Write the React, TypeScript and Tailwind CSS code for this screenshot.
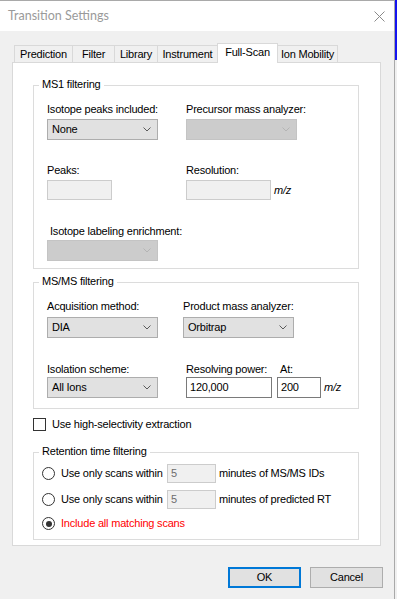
import React from "react";

const Chevron = ({ disabled }: { disabled?: boolean }) => (
  <svg width="8" height="5" viewBox="0 0 8 5" className="shrink-0">
    <polyline
      points="0.5,0.5 4,4 7.5,0.5"
      fill="none"
      stroke={disabled ? "#b4b4b4" : "#5a5a5a"}
      strokeWidth="1"
    />
  </svg>
);

const Combo = ({ value, disabled }: { value?: string; disabled?: boolean }) => (
  <div
    className={`h-[21px] w-[111px] flex items-center justify-between pl-[4px] pr-[6px] border ${
      disabled ? "bg-[#cccccc] border-[#c4c4c4]" : "bg-[#e1e1e1] border-[#adadad]"
    }`}
  >
    <span>{value}</span>
    <Chevron disabled={disabled} />
  </div>
);

const Label = ({ children, className = "" }: { children: React.ReactNode; className?: string }) => (
  <div className={`h-[13px] leading-[13px] whitespace-nowrap ${className}`}>{children}</div>
);

const Group = ({
  title,
  className = "",
  children,
}: {
  title: string;
  className?: string;
  children: React.ReactNode;
}) => (
  <div className={`relative w-[326px] border border-[#dcdcdc] ${className}`}>
    <span className="absolute -top-[8px] left-[5px] bg-white px-[3px] leading-[13px]">{title}</span>
    {children}
  </div>
);

const Radio = ({ checked }: { checked?: boolean }) => (
  <div className="w-[13px] h-[13px] rounded-full border border-[#333333] bg-white flex items-center justify-center shrink-0">
    {checked && <div className="w-[6px] h-[6px] rounded-full bg-[#333333]" />}
  </div>
);

const tabs = [
  { name: "Prediction", w: "w-[59px]" },
  { name: "Filter", w: "w-[43px]" },
  { name: "Library", w: "w-[44px]" },
  { name: "Instrument", w: "w-[61px]" },
  { name: "Full-Scan", w: "w-[61px]", active: true },
  { name: "Ion Mobility", w: "w-[61px]" },
];

export default function App() {
  return (
    <div className="w-[397px] h-[599px] flex bg-[#f0f0f0] overflow-hidden font-['Liberation_Sans',Arial,sans-serif] text-[11px] tracking-[-0.2px] text-black">
      <div className="w-[395px] flex flex-col border-t border-r border-[#a9a9a9]">
        {/* title bar */}
        <div className="h-[30px] bg-white flex items-center justify-between pl-[8px] pr-[9px]">
          <span className="font-['Lato',sans-serif] text-[12.5px] tracking-normal text-[#9a9a9a]">
            Transition Settings
          </span>
          <svg width="11" height="11" viewBox="0 0 11 11">
            <path d="M0.5 0.5 L10.5 10.5 M10.5 0.5 L0.5 10.5" stroke="#8a8a8a" strokeWidth="1" />
          </svg>
        </div>

        <div className="flex-1 flex flex-col pt-[12px] pl-[12px] pr-[11px]">
          {/* tabs */}
          <div className="h-[19px] flex items-end pl-[2px]">
            {tabs.map((t, i) => (
              <div
                key={t.name}
                className={`${t.w} ${i > 0 ? "-ml-px" : ""} flex items-center justify-center border border-b-0 border-[#d9d9d9] whitespace-nowrap ${
                  t.active ? "h-[20px] -mb-px bg-white relative z-10 pb-[2px]" : "h-[17px] bg-[#f0f0f0]"
                }`}
              >
                {t.name}
              </div>
            ))}
          </div>

          {/* panel */}
          <div className="w-[369px] h-[484px] bg-white border border-[#d9d9d9] pl-[20px] pt-[22px] flex flex-col">
            <Group title="MS1 filtering" className="h-[184px] pl-[13px] pt-[17px]">
              <div className="flex">
                <div className="w-[139px]">
                  <Label>Isotope peaks included:</Label>
                  <div className="mt-[3px]">
                    <Combo value="None" />
                  </div>
                </div>
                <div>
                  <Label>Precursor mass analyzer:</Label>
                  <div className="mt-[3px]">
                    <Combo disabled />
                  </div>
                </div>
              </div>
              <div className="flex mt-[24px]">
                <div className="w-[139px]">
                  <Label>Peaks:</Label>
                  <div className="mt-[3px] w-[65px] h-[20px] border border-[#cccccc] bg-[#f0f0f0]" />
                </div>
                <div>
                  <Label>Resolution:</Label>
                  <div className="mt-[3px] flex items-center">
                    <div className="w-[85px] h-[20px] border border-[#cccccc] bg-[#f0f0f0]" />
                    <span className="ml-[3px] italic">m/z</span>
                  </div>
                </div>
              </div>
              <Label className="mt-[25px] ml-[3px]">Isotope labeling enrichment:</Label>
              <div className="mt-[2px]">
                <Combo disabled />
              </div>
            </Group>

            <Group title="MS/MS filtering" className="h-[127px] mt-[13px] pl-[13px] pt-[17px]">
              <div className="flex">
                <div className="w-[136px]">
                  <Label>Acquisition method:</Label>
                  <div className="mt-[4px]">
                    <Combo value="DIA" />
                  </div>
                </div>
                <div>
                  <Label>Product mass analyzer:</Label>
                  <div className="mt-[4px]">
                    <Combo value="Orbitrap" />
                  </div>
                </div>
              </div>
              <div className="flex mt-[25px]">
                <div className="w-[139px]">
                  <Label>Isolation scheme:</Label>
                  <div className="mt-[1px]">
                    <Combo value="All Ions" />
                  </div>
                </div>
                <div className="w-[91px]">
                  <Label>Resolving power:</Label>
                  <div className="mt-[1px] w-[86px] h-[21px] border border-[#7a7a7a] bg-white flex items-center pl-[3px]">
                    120,000
                  </div>
                </div>
                <div>
                  <Label className="ml-[3px]">At:</Label>
                  <div className="mt-[1px] flex items-center">
                    <div className="w-[44px] h-[21px] border border-[#7a7a7a] bg-white flex items-center pl-[3px]">
                      200
                    </div>
                    <span className="ml-[3px] italic">m/z</span>
                  </div>
                </div>
              </div>
            </Group>

            <div className="mt-[9px] flex items-center h-[13px]">
              <div className="w-[13px] h-[13px] border border-[#333333] bg-white" />
              <span className="ml-[6px]">Use high-selectivity extraction</span>
            </div>

            <Group title="Retention time filtering" className="h-[88px] mt-[21px] pl-[8px] pt-[11px]">
              <div className="flex items-center h-[19px]">
                <Radio />
                <span className="ml-[6px] w-[106px]">Use only scans within</span>
                <div className="w-[49px] h-[19px] border border-[#cccccc] bg-[#f0f0f0] flex items-center pl-[3px] text-[#6d6d6d]">
                  5
                </div>
                <span className="ml-[3px]">minutes of MS/MS IDs</span>
              </div>
              <div className="flex items-center h-[19px] mt-[7px]">
                <Radio />
                <span className="ml-[6px] w-[106px]">Use only scans within</span>
                <div className="w-[49px] h-[19px] border border-[#cccccc] bg-[#f0f0f0] flex items-center pl-[3px] text-[#6d6d6d]">
                  5
                </div>
                <span className="ml-[3px]">minutes of predicted RT</span>
              </div>
              <div className="flex items-center h-[19px] mt-[5px]">
                <Radio checked />
                <span className="ml-[6px] text-[#ff0000]">Include all matching scans</span>
              </div>
            </Group>
          </div>

          {/* buttons */}
          <div className="mt-[21px] flex justify-end gap-[9px]">
            <div className="w-[73px] h-[21px] border-2 border-[#0078d7] bg-[#e1e1e1] flex items-center justify-center">
              OK
            </div>
            <div className="w-[73px] h-[21px] border border-[#adadad] bg-[#e1e1e1] flex items-center justify-center">
              Cancel
            </div>
          </div>
        </div>
      </div>
      <div className="w-[2px] flex flex-col">
        <div className="h-[60px] bg-[#1414f0]" />
        <div className="flex-1 bg-[#f0f0f0]" />
      </div>
    </div>
  );
}
